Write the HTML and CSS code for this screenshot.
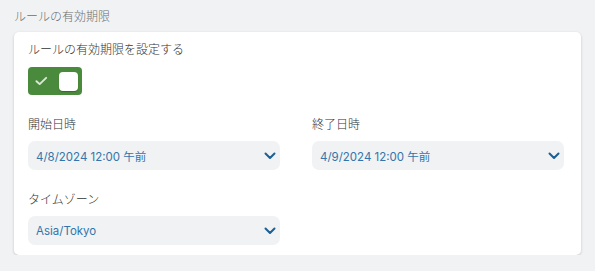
FILE: index.html
```html
<!DOCTYPE html>
<html lang="ja">
<head>
<meta charset="utf-8">
<link rel="stylesheet" href="styles.css">
</head>
<body>
<div class="page">
  <div class="section-title">ルールの有効期限</div>
  <div class="card">
    <div class="label">ルールの有効期限を設定する</div>
    <div class="toggle">
      <svg class="check" width="13" height="10" viewBox="0 0 13 10"><path d="M1.5 5.2 L4.8 8.2 L11.5 1.8" fill="none" stroke="#d9ead3" stroke-width="2" stroke-linecap="round" stroke-linejoin="round"/></svg>
      <span class="knob"></span>
    </div>
    <div class="grid">
      <div class="field">
        <div class="label">開始日時</div>
        <div class="select"><span>4/8/2024 12:00 午前</span><svg class="chev" width="12" height="8" viewBox="0 0 12 8"><path d="M1.5 1.5 L6 6 L10.5 1.5" fill="none" stroke="#1d5f93" stroke-width="2" stroke-linecap="round" stroke-linejoin="round"/></svg></div>
      </div>
      <div class="field">
        <div class="label">終了日時</div>
        <div class="select"><span>4/9/2024 12:00 午前</span><svg class="chev" width="12" height="8" viewBox="0 0 12 8"><path d="M1.5 1.5 L6 6 L10.5 1.5" fill="none" stroke="#1d5f93" stroke-width="2" stroke-linecap="round" stroke-linejoin="round"/></svg></div>
      </div>
      <div class="field">
        <div class="label">タイムゾーン</div>
        <div class="select"><span>Asia/Tokyo</span><svg class="chev" width="12" height="8" viewBox="0 0 12 8"><path d="M1.5 1.5 L6 6 L10.5 1.5" fill="none" stroke="#1d5f93" stroke-width="2" stroke-linecap="round" stroke-linejoin="round"/></svg></div>
      </div>
    </div>
  </div>
</div>
</body>
</html>
```
FILE: styles.css
```css
html, body {
  margin: 0;
  padding: 0;
  background: #f1f2f4;
}
body {
  font-family: Inter, "Noto Sans CJK JP", sans-serif;
  font-size: 12px;
}
.page {
  padding: 8px 14px 0 14px;
}
.section-title {
  color: #6e6e6e;
  font-size: 12px;
  font-weight: 300;
  line-height: 18px;
  margin-bottom: 6px;
}
.card {
  background: #fff;
  border-radius: 5px;
  box-shadow: 0 1px 3px rgba(0,0,0,0.18);
  padding: 10px 17px 10px 14px;
}
.label {
  color: #333;
  font-size: 12px;
  font-weight: 300;
  line-height: 16px;
}
.toggle {
  margin-top: 9px;
  width: 54px;
  height: 28px;
  box-sizing: border-box;
  background: #4a8a3c;
  border-radius: 4px;
  display: flex;
  align-items: center;
  padding: 0 4px 0 7px;
  gap: 11px;
}
.check {
  display: block;
}
.knob {
  width: 20px;
  height: 19px;
  background: #fff;
  border-radius: 4px;
  box-shadow: 0 1px 1px rgba(0,0,0,0.25);
}
.grid {
  margin-top: 22px;
  display: grid;
  grid-template-columns: 252px 252px;
  column-gap: 32px;
  row-gap: 22px;
}
.field .label {
  margin-bottom: 8px;
}
.select {
  height: 29px;
  box-sizing: border-box;
  background: #f0f2f4;
  border-radius: 7px;
  display: flex;
  align-items: center;
  justify-content: space-between;
  padding: 0 4px 0 8px;
  color: #3474a9;
  font-size: 11.5px;
}
.chev {
  display: block;
}
```
